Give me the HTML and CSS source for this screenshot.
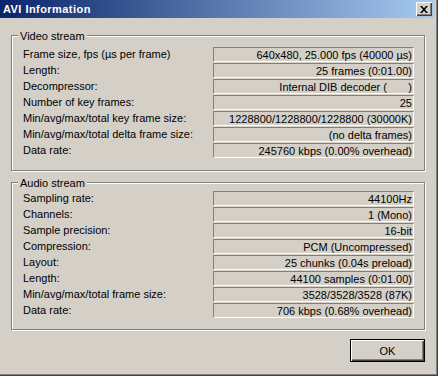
FILE: index.html
```html
<!DOCTYPE html>
<html lang="en">
<head>
<meta charset="UTF-8">
<title>AVI Information</title>
<link rel="stylesheet" href="styles.css">
</head>
<body>

<div class="window">
    <div class="titlebar">
        <span class="title">AVI Information</span>
        <button class="close" type="button" aria-label="Close">
            <svg width="8" height="7" viewBox="0 0 8 7">
                <path d="M0 0h2l2 2.2L6 0h2L5 3.5 8 7H6L4 4.8 2 7H0l3-3.5z" fill="#000"/>
            </svg>
        </button>
    </div>

    <div class="content">
        <div class="group video">
            <span class="legend">Video stream</span>
            <div class="row"><span class="label">Frame size, fps (µs per frame)</span><span class="value">640x480, 25.000 fps (40000 µs)</span></div>
            <div class="row"><span class="label">Length:</span><span class="value">25 frames (0:01.00)</span></div>
            <div class="row"><span class="label">Decompressor:</span><span class="value">Internal DIB decoder (&nbsp;&nbsp;&nbsp;&nbsp;&nbsp;&nbsp;&nbsp;)</span></div>
            <div class="row"><span class="label">Number of key frames:</span><span class="value">25</span></div>
            <div class="row"><span class="label">Min/avg/max/total key frame size:</span><span class="value">1228800/1228800/1228800 (30000K)</span></div>
            <div class="row"><span class="label">Min/avg/max/total delta frame size:</span><span class="value">(no delta frames)</span></div>
            <div class="row"><span class="label">Data rate:</span><span class="value">245760 kbps (0.00% overhead)</span></div>
        </div>

        <div class="group audio">
            <span class="legend">Audio stream</span>
            <div class="row"><span class="label">Sampling rate:</span><span class="value">44100Hz</span></div>
            <div class="row"><span class="label">Channels:</span><span class="value">1 (Mono)</span></div>
            <div class="row"><span class="label">Sample precision:</span><span class="value">16-bit</span></div>
            <div class="row"><span class="label">Compression:</span><span class="value">PCM (Uncompressed)</span></div>
            <div class="row"><span class="label">Layout:</span><span class="value">25 chunks (0.04s preload)</span></div>
            <div class="row"><span class="label">Length:</span><span class="value">44100 samples (0:01.00)</span></div>
            <div class="row"><span class="label">Min/avg/max/total frame size:</span><span class="value">3528/3528/3528 (87K)</span></div>
            <div class="row"><span class="label">Data rate:</span><span class="value">706 kbps (0.68% overhead)</span></div>
        </div>

        <div class="buttons">
            <button class="ok" type="button">OK</button>
        </div>
    </div>
</div>

</body>
</html>
```

FILE: styles.css
```css
body {
    margin: 0;
    padding: 0;
    background-color: #d4d0c8;
    font-family: 'Liberation Sans', Arial, sans-serif;
    font-size: 11px;
    color: #000;
}

.window {
    width: 438px;
    height: 376px;
    box-sizing: border-box;
    background-color: #d4d0c8;
    box-shadow: inset -1px -1px 0 #404040, inset -2px -2px 0 #808080;
    overflow: hidden;
}

.titlebar {
    width: 434px;
    height: 18px;
    display: flex;
    align-items: center;
    justify-content: space-between;
    background: linear-gradient(to right, #0a246a, #a6caf0);
}

.title {
    padding-left: 3px;
    color: #fff;
    font-weight: bold;
    font-size: 11px;
    letter-spacing: 0.45px;
    line-height: 18px;
}

.close {
    width: 16px;
    height: 14px;
    margin-right: 2px;
    padding: 0;
    border: none;
    background-color: #d4d0c8;
    box-shadow: inset 1px 1px 0 #fff, inset -1px -1px 0 #404040, inset -2px -2px 0 #808080;
    display: flex;
    align-items: center;
    justify-content: center;
}

.close svg {
    display: block;
    margin-left: -1px;
}

.content {
    padding: 17px 0 0 11px;
}

.group {
    position: relative;
    width: 414px;
    box-sizing: border-box;
    border: 1px solid #808080;
    box-shadow: 1px 1px 0 #fff, inset 1px 1px 0 #fff;
    display: flex;
    flex-direction: column;
    gap: 1px;
}

.video {
    padding: 11px 10px 12px 11px;
}

.audio {
    margin-top: 11px;
    padding: 8px 10px 11px 11px;
}

.legend {
    position: absolute;
    top: -6px;
    left: 6px;
    padding: 0 2px;
    line-height: 13px;
    background-color: #d4d0c8;
}

.row {
    display: flex;
    align-items: center;
    justify-content: space-between;
    height: 15px;
}

.label {
    line-height: 13px;
    margin-top: -1px;
}

.value {
    width: 201px;
    height: 15px;
    box-sizing: border-box;
    padding: 1px 1px 0 0;
    border-top: 1px solid #808080;
    border-left: 1px solid #808080;
    border-bottom: 1px solid #fff;
    border-right: 1px solid #fff;
    text-align: right;
    line-height: 13px;
    white-space: nowrap;
}

.buttons {
    width: 414px;
    display: flex;
    justify-content: flex-end;
    margin-top: 9px;
}

.ok {
    width: 75px;
    height: 23px;
    padding: 0;
    border: 1px solid #000;
    background-color: #d4d0c8;
    box-shadow: inset 1px 1px 0 #fff, inset -1px -1px 0 #404040, inset -2px -2px 0 #808080;
    font-family: 'Liberation Sans', Arial, sans-serif;
    font-size: 11px;
    color: #000;
}
```
